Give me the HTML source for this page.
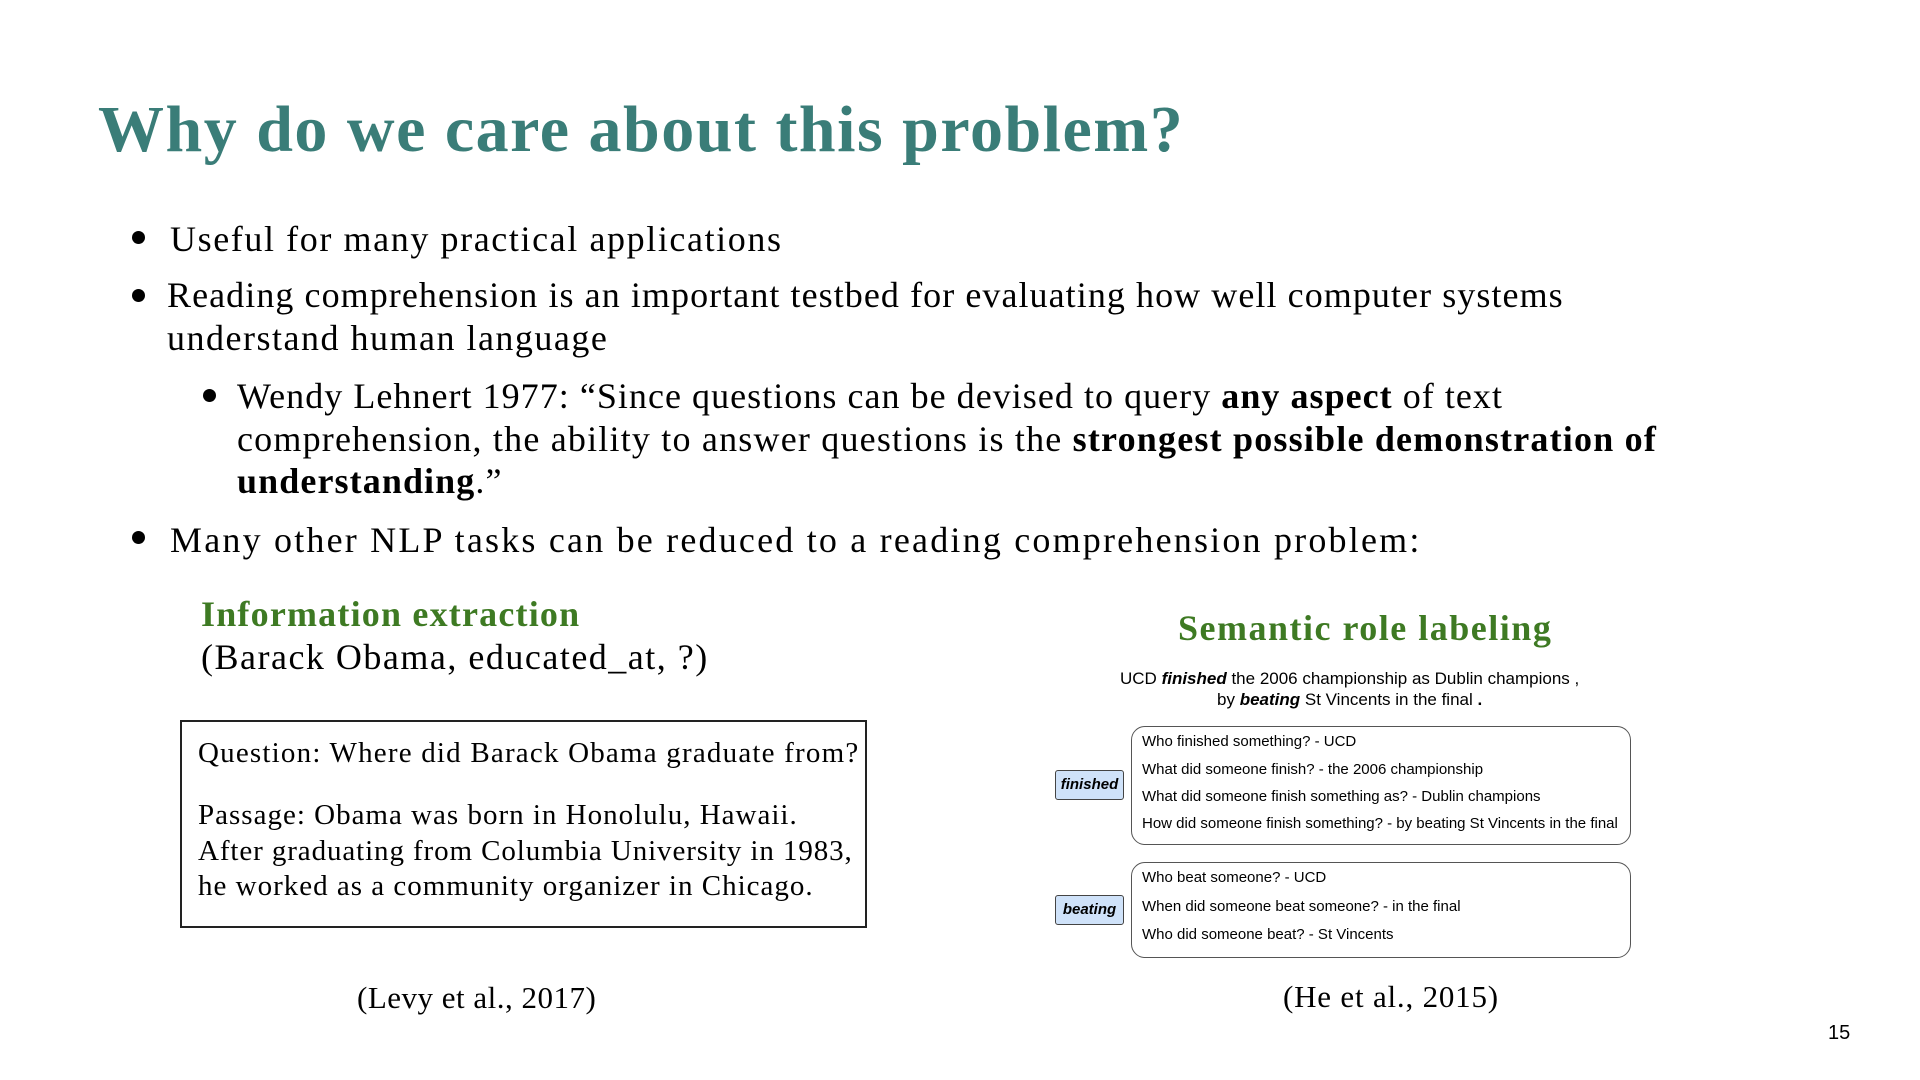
<!DOCTYPE html>
<html><head><meta charset="utf-8"><style>
body{margin:0;width:1920px;height:1080px;background:#fff;position:relative;overflow:hidden;font-family:"Liberation Serif",serif;color:#000}
.a{position:absolute;white-space:nowrap;line-height:1}
.s{font-family:"Liberation Sans",sans-serif}
.dot{position:absolute;width:13px;height:13px;border-radius:50%;background:#000}
.g{color:#3e7a23;font-weight:bold}
.bx{position:absolute;border:1.5px solid #555;border-radius:14px}
.lb{position:absolute;background:#cfe2f9;border:1.5px solid #444;border-radius:3px;font-family:"Liberation Sans",sans-serif;font-style:italic;font-weight:bold;font-size:15px;text-align:center;line-height:28px}
.q{font-size:15px;letter-spacing:0}
</style></head><body>
<div class="a" style="left:98px;top:97px;font-size:66px;font-weight:bold;color:#3a7d78;letter-spacing:1.5px">Why do we care about this problem?</div>

<div class="dot" style="left:132px;top:231px"></div>
<div class="a" style="left:170px;top:221px;font-size:36px;letter-spacing:1.6px">Useful for many practical applications</div>
<div class="dot" style="left:132px;top:289px"></div>
<div class="a" style="left:167px;top:277px;font-size:36px;letter-spacing:1.07px">Reading comprehension is an important testbed for evaluating how well computer systems</div>
<div class="a" style="left:167px;top:320px;font-size:36px;letter-spacing:1.5px">understand human language</div>
<div class="dot" style="left:203px;top:389px"></div>
<div class="a" style="left:237px;top:378px;font-size:36px;letter-spacing:1.04px">Wendy Lehnert 1977: “Since questions can be devised to query <b>any aspect</b> of text</div>
<div class="a" style="left:237px;top:421px;font-size:36px;letter-spacing:1.2px">comprehension, the ability to answer questions is the <b>strongest possible demonstration of</b></div>
<div class="a" style="left:237px;top:463px;font-size:36px;letter-spacing:1.1px"><b>understanding</b>.”</div>
<div class="dot" style="left:132px;top:531px"></div>
<div class="a" style="left:170px;top:522px;font-size:36px;letter-spacing:2.2px">Many other NLP tasks can be reduced to a reading comprehension problem:</div>

<div class="a g" style="left:201px;top:596px;font-size:36px;letter-spacing:1.2px">Information extraction</div>
<div class="a" style="left:201px;top:639px;font-size:36px;letter-spacing:1.5px">(Barack Obama, educated_at, ?)</div>

<div style="position:absolute;left:180px;top:720px;width:683px;height:204px;border:2px solid #222"></div>
<div class="a" style="left:198px;top:739px;font-size:29px;letter-spacing:1.2px">Question: Where did Barack Obama graduate from?</div>
<div class="a" style="left:198px;top:801px;font-size:29px;letter-spacing:1px">Passage: Obama was born in Honolulu, Hawaii.</div>
<div class="a" style="left:198px;top:837px;font-size:29px;letter-spacing:0.9px">After graduating from Columbia University in 1983,</div>
<div class="a" style="left:198px;top:872px;font-size:29px;letter-spacing:1px">he worked as a community organizer in Chicago.</div>
<div class="a" style="left:357px;top:982px;font-size:31px;letter-spacing:0.5px">(Levy et al., 2017)</div>

<div class="a g" style="left:1178px;top:610px;font-size:36px;letter-spacing:1.5px">Semantic role labeling</div>
<div class="a s" style="left:1120px;top:670px;font-size:17px">UCD <b><i>finished</i></b> the 2006 championship as Dublin champions ,</div>
<div class="a s" style="left:1217px;top:691px;font-size:17px">by <b><i>beating</i></b> St Vincents in the final <b>.</b></div>

<div class="bx" style="left:1131px;top:726px;width:498px;height:117px"></div>
<div class="a s q" style="left:1142px;top:734px">Who finished something? - UCD</div>
<div class="a s q" style="left:1142px;top:762px">What did someone finish? - the 2006 championship</div>
<div class="a s q" style="left:1142px;top:789px">What did someone finish something as? - Dublin champions</div>
<div class="a s q" style="left:1142px;top:816px">How did someone finish something? - by beating St Vincents in the final</div>
<div class="lb" style="left:1055px;top:770px;width:67px;height:28px">finished</div>

<div class="bx" style="left:1131px;top:862px;width:498px;height:94px"></div>
<div class="a s q" style="left:1142px;top:870px">Who beat someone? - UCD</div>
<div class="a s q" style="left:1142px;top:899px">When did someone beat someone? - in the final</div>
<div class="a s q" style="left:1142px;top:927px">Who did someone beat? - St Vincents</div>
<div class="lb" style="left:1055px;top:895px;width:67px;height:28px">beating</div>

<div class="a" style="left:1283px;top:981px;font-size:31px;letter-spacing:0.8px">(He et al., 2015)</div>
<div class="a s" style="left:1828px;top:1023px;font-size:20px">15</div>
</body></html>
